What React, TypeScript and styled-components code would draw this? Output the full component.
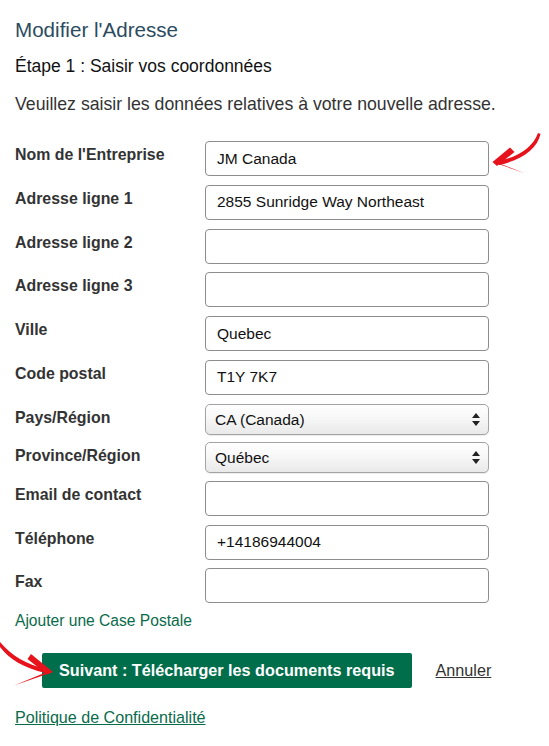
import React from "react";
import styled, { createGlobalStyle } from "styled-components";

const Global = createGlobalStyle`
  html, body {
    margin: 0;
    padding: 0;
    background: #fff;
  }
  body {
    font-family: "Liberation Sans", Arial, sans-serif;
    color: #333;
  }
`;

const Page = styled.div`
  position: relative;
  width: 549px;
  min-height: 746px;
  padding: 17px 0 0 15px;
  box-sizing: border-box;
  overflow: hidden;
`;

const Title = styled.h1`
  margin: 0;
  font-size: 20.6px;
  line-height: 26px;
  font-weight: 400;
  color: #2c4b61;
`;

const Step = styled.h2`
  margin: 12px 0 0;
  font-size: 17.5px;
  line-height: 22px;
  font-weight: 400;
  color: #111;
`;

const Intro = styled.p`
  margin: 16px 0 0;
  font-size: 17.7px;
  line-height: 22px;
  color: #333;
`;

const Form = styled.form`
  margin-top: 26px;
  display: flex;
  flex-direction: column;
`;

const Row = styled.div<{ $select?: boolean }>`
  display: grid;
  grid-template-columns: 190px 284px;
  align-items: start;
  margin-bottom: ${(p) => (p.$select ? 7.5 : 8.8)}px;
`;

const Label = styled.label`
  font-size: 15.9px;
  font-weight: 700;
  color: #333;
  line-height: 20px;
  padding-top: 4px;
`;

const Input = styled.input`
  box-sizing: border-box;
  width: 284px;
  height: 35px;
  border: 1px solid #8d8d8d;
  border-radius: 4px;
  padding: 0 11px;
  font-family: "Liberation Sans", Arial, sans-serif;
  font-size: 15.5px;
  color: #111;
  background: #fff;
  outline: none;
`;

const SelectWrap = styled.div`
  position: relative;
  width: 284px;
  height: 31px;
`;

const Select = styled.select`
  box-sizing: border-box;
  appearance: none;
  width: 100%;
  height: 31px;
  border: 1px solid #a3a3a3;
  border-radius: 5px;
  padding: 0 24px 0 9px;
  font-family: "Liberation Sans", Arial, sans-serif;
  font-size: 15.5px;
  color: #111;
  background: linear-gradient(#ffffff 0%, #f7f7f7 45%, #e9e9e9 100%);
  box-shadow: 0 1px 1px rgba(0, 0, 0, 0.08);
  outline: none;
`;

const Stepper = styled.svg`
  position: absolute;
  right: 9px;
  top: 9px;
  pointer-events: none;
`;

const AddLink = styled.a`
  display: inline-block;
  margin-top: -1px;
  font-size: 15.6px;
  color: #0a6b4b;
  text-decoration: none;
`;

const Actions = styled.div`
  display: flex;
  align-items: center;
  gap: 24px;
  margin: 23px 0 0 27px;
`;

const Primary = styled.button`
  height: 35px;
  padding: 0 17px;
  border: none;
  border-radius: 2px;
  background: #006e4b;
  color: #fff;
  font-family: "Liberation Sans", Arial, sans-serif;
  font-size: 16.2px;
  font-weight: 700;
  cursor: pointer;
`;

const Cancel = styled.a`
  font-size: 16.2px;
  color: #333;
  text-decoration: underline;
`;

const Privacy = styled.a`
  display: inline-block;
  margin-top: 20px;
  font-size: 16.1px;
  color: #0a6b4b;
  text-decoration: underline;
`;

const Arrow = styled.svg<{ $left: number; $top: number }>`
  position: absolute;
  left: ${(p) => p.$left}px;
  top: ${(p) => p.$top}px;
  pointer-events: none;
`;

type Field = { label: string; value?: string; select?: boolean };

const fields: Field[] = [
  { label: "Nom de l'Entreprise", value: "JM Canada" },
  { label: "Adresse ligne 1", value: "2855 Sunridge Way Northeast" },
  { label: "Adresse ligne 2" },
  { label: "Adresse ligne 3" },
  { label: "Ville", value: "Quebec" },
  { label: "Code postal", value: "T1Y 7K7" },
  { label: "Pays/Région", value: "CA (Canada)", select: true },
  { label: "Province/Région", value: "Québec", select: true },
  { label: "Email de contact" },
  { label: "Téléphone", value: "+14186944004" },
  { label: "Fax" },
];

function UpDown() {
  return (
    <Stepper width="8" height="13" viewBox="0 0 8 13">
      <path d="M4 0 L8 5 L0 5 Z" fill="#222" />
      <path d="M0 8 L8 8 L4 13 Z" fill="#222" />
    </Stepper>
  );
}

export default function App() {
  return (
    <>
      <Global />
      <Page>
        <Title>Modifier l'Adresse</Title>
        <Step>Étape 1 : Saisir vos coordonnées</Step>
        <Intro>Veuillez saisir les données relatives à votre nouvelle adresse.</Intro>

        <Form onSubmit={(e) => e.preventDefault()}>
          {fields.map((f) => (
            <Row key={f.label} $select={f.select}>
              <Label>{f.label}</Label>
              {f.select ? (
                <SelectWrap>
                  <Select defaultValue={f.value}>
                    <option>{f.value}</option>
                  </Select>
                  <UpDown />
                </SelectWrap>
              ) : (
                <Input defaultValue={f.value ?? ""} />
              )}
            </Row>
          ))}
        </Form>

        <AddLink href="#">Ajouter une Case Postale</AddLink>

        <Actions>
          <Primary type="button">Suivant : Télécharger les documents requis</Primary>
          <Cancel href="#">Annuler</Cancel>
        </Actions>

        <Privacy href="#">Politique de Confidentialité</Privacy>

        {/* red hand-drawn arrows pointing at the field and the button */}
        <Arrow $left={488} $top={128} width="60" height="54" viewBox="0 0 60 54">
          <path
            d="M50 5 C45 19 31 29 10 33 L11 37 C34 32 49 21 52.5 6 Z"
            fill="#e6121c"
          />
          <path d="M4.5 34 L22 19.5 L26.5 24 L9 38 Z" fill="#e6121c" />
          <path d="M4.5 34 L10 35 L36 45 Z" fill="#e6121c" />
        </Arrow>

        <Arrow $left={0} $top={638} width="58" height="54" viewBox="0 0 58 54">
          <path
            d="M0 4 C12 18 26 26 46 31 L45.5 35 C24 30 9 21 0 9 Z"
            fill="#e6121c"
          />
          <path d="M53 34 L31 16 L27.5 21 L47 36.5 Z" fill="#e6121c" />
          <path d="M53 34 L48 33.5 L14 47.5 Z" fill="#e6121c" />
        </Arrow>
      </Page>
    </>
  );
}
